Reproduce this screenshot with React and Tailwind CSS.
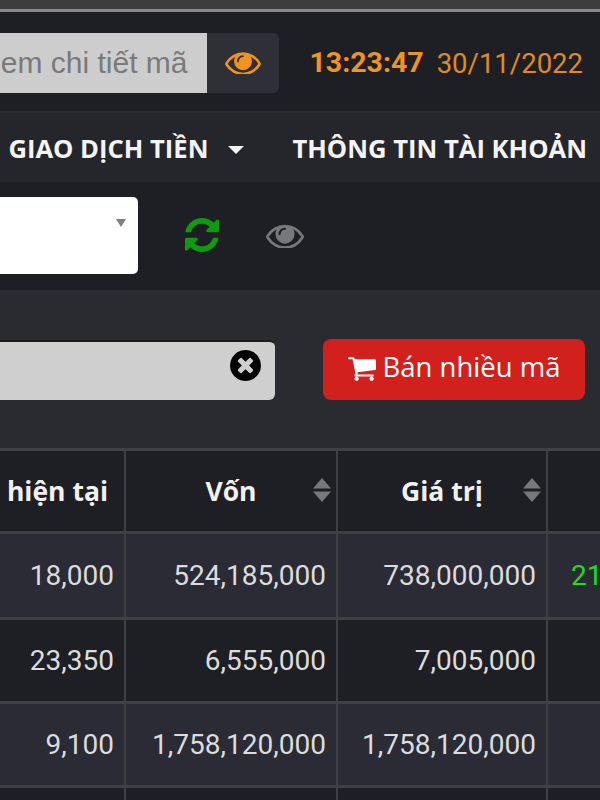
import React from "react";

const sans = "font-['Open_Sans','Noto_Sans',sans-serif]";
const digits = "font-['Roboto',sans-serif]";

function Eye({ className }) {
  return (
    <svg viewBox="0 320 1792 1152" className={className} fill="currentColor">
      <path d="M1664 960q-152-236-381-353 61 104 61 225 0 185-131.500 316.500t-316.500 131.500-316.500-131.500-131.500-316.500q0-121 61-225-229 117-381 353 133 205 333.500 326.500t434.500 121.500 434.500-121.500 333.500-326.500zm-720-384q0-20-14-34t-34-14q-125 0-214.500 89.500t-89.500 214.500q0 20 14 34t34 14 34-14 14-34q0-86 61-147t147-61q20 0 34-14t14-34zm848 384q0 34-20 69-140 230-376.500 368.500t-499.500 138.500-499.500-139-376.500-368q-20-35-20-69t20-69q140-229 376.500-368t499.500-139 499.500 139 376.500 368q20 35 20 69z" />
    </svg>
  );
}

function Refresh({ className }) {
  return (
    <svg viewBox="128 128 1536 1536" className={className} fill="currentColor">
      <path d="M1639 1056q0 5-1 7-64 268-268 434.500t-478 166.500q-146 0-282.500-55t-243.500-157l-129 129q-19 19-45 19t-45-19-19-45v-448q0-26 19-45t45-19h448q26 0 45 19t19 45-19 45l-137 137q71 66 161 102t187 36q134 0 250-65t186-179q11-17 53-117 8-23 30-23h192q13 0 22.500 9.500t9.500 22.500zm25-800v448q0 26-19 45t-45 19h-448q-26 0-45-19t-19-45 19-45l138-138q-148-137-349-137-134 0-250 65t-186 179q-11 17-53 117-8 23-30 23h-199q-13 0-22.500-9.500t-9.500-22.500v-7q65-268 270-434.500t480-166.500q146 0 284 55.500t245 156.500l130-129q19-19 45-19t45 19 19 45z" />
    </svg>
  );
}

function Cart({ className }) {
  return (
    <svg viewBox="64 256 1664 1408" className={className} fill="currentColor">
      <path d="M704 1536q0 52-38 90t-90 38-90-38-38-90 38-90 90-38 90 38 38 90zm896 0q0 52-38 90t-90 38-90-38-38-90 38-90 90-38 90 38 38 90zm128-1088v512q0 24-16.500 42.500t-40.500 21.500l-1044 122q13 60 13 70 0 16-24 64h920q26 0 45 19t19 45-19 45-45 19h-1024q-26 0-45-19t-19-45q0-11 8-31.500t16-36 21.500-40 15.500-29.500l-177-823h-204q-26 0-45-19t-19-45 19-45 45-19h256q16 0 28.500 6.500t19.500 15.500 13 24.500 8 26 5.500 29.500 4.500 26h1201q26 0 45 19t19 45z" />
    </svg>
  );
}

function CloseCircle({ className }) {
  return (
    <svg viewBox="128 128 1536 1536" className={className} fill="currentColor">
      <path d="M1277 1122q0-26-19-45l-181-181 181-181q19-19 19-45 0-27-19-46l-90-90q-19-19-46-19-26 0-45 19l-181 181-181-181q-19-19-45-19-27 0-46 19l-90 90q-19 19-19 46 0 26 19 45l181 181-181 181q-19 19-19 45 0 27 19 46l90 90q19 19 46 19 26 0 45-19l181-181 181 181q19 19 45 19 27 0 46-19l90-90q19-19 19-46zm387-226q0 209-103 385.500t-279.500 279.500-385.500 103-385.500-103-279.500-279.500-103-385.500 103-385.500 279.500-279.500 385.500-103 385.500 103 279.500 279.500 103 385.500z" />
    </svg>
  );
}

function Sort() {
  return (
    <svg viewBox="0 0 18 24" className="w-[18px] h-[24px] text-[#77787c]" fill="currentColor">
      <path d="M9 0l9 10.500H0z" />
      <path d="M9 24l9-10.500H0z" />
    </svg>
  );
}

function Th({ w, children, sort, align = "justify-center" }) {
  return (
    <div className={`relative ${w} shrink-0 flex items-center ${align} pt-[2px] border-r-2 border-[#3f4044] font-bold text-[#f1f1f1] text-[26.500px] whitespace-nowrap`}>
      {children}
      {sort && <span className="absolute right-[5px] top-[27px] flex"><Sort /></span>}
    </div>
  );
}

function Td({ w, children }) {
  return (
    <div className={`${w} shrink-0 flex items-center justify-end pr-[10px] pt-[1px] border-r-2 border-[#3f4044] text-[#dcdcdc] text-[28px] ${digits}`}>
      {children}
    </div>
  );
}

function Row({ bg, h, a, b, c, d }) {
  return (
    <div className={`flex ${h} ${bg} border-b-[3px] border-[#3f4044]`}>
      <Td w="w-[126px]">{a}</Td>
      <Td w="w-[212px]">{b}</Td>
      <Td w="w-[210px]">{c}</Td>
      <div className={`flex-1 flex items-center pl-[23px] pt-[1px] text-[#1fdc1f] text-[28px] overflow-hidden whitespace-nowrap ${digits}`}>{d}</div>
    </div>
  );
}

export default function App() {
  return (
    <div className={`${sans} w-[600px] h-[800px] overflow-hidden bg-[#1e1f24]`}>
      <div className="h-[12px] bg-[#3c3c3e] border-b-[3px] border-[#8a8a8c]" />
      <div className="h-[101px] flex items-center justify-end pr-[17px] pt-[2px] border-b-2 border-[#2c2d32]">
        <div className="flex-1 min-w-0 flex justify-end overflow-hidden">
          <div className="h-[60px] w-[240px] shrink-0 bg-[#cdcdcd] flex items-center justify-end pr-[20px] text-[#7a7a7a] text-[30px] font-['Liberation_Sans',sans-serif] whitespace-nowrap">
            Xem chi tiết mã
          </div>
        </div>
        <div className="h-[60px] w-[72px] shrink-0 bg-[#2f3037] rounded-r-[6px] flex items-center justify-center mr-[30px]">
          <Eye className="w-[36px] h-[23px] text-[#f0941f]" />
        </div>
        <span className={`text-[28.500px] font-bold text-[#f0941f] leading-none pt-[2px] ${digits}`}>13:23:47</span>
        <span className={`text-[27.500px] text-[#e08a20] leading-none pt-[2px] ml-[13px] ${digits}`}>30/11/2022</span>
      </div>
      <div className="h-[69px] bg-[#25262b] flex items-center justify-end pr-[13px] pt-[4px] text-[#f4f4f4] font-bold text-[25.600px] whitespace-nowrap overflow-hidden">
        <span>GIAO DỊCH TIỀN</span>
        <span className="ml-[20px] mr-[48px] w-0 h-0 border-x-[8px] border-x-transparent border-t-[8px] border-t-[#f4f4f4]" />
        <span>THÔNG TIN TÀI KHOẢN</span>
      </div>
      <div className="h-[108px] flex items-center pb-[2px]">
        <div className="relative w-[138px] h-[77px] shrink-0 bg-white rounded-r-[5px]">
          <span className="absolute right-[12px] top-[22px] w-0 h-0 border-x-[5px] border-x-transparent border-t-[8px] border-t-[#808080]" />
        </div>
        <Refresh className="ml-[47px] w-[34px] h-[34px] text-[#0f9a0f]" />
        <Eye className="ml-[47px] w-[38px] h-[25px] text-[#77787c]" />
      </div>
      <div className="h-[158px] bg-[#2a2b31] flex items-start pt-[50px]">
        <div className="relative w-[275px] h-[60px] shrink-0 bg-[#cfcfcf] rounded-r-[6px] border-t-2 border-[#1a1a1c]">
          <CloseCircle className="absolute right-[14px] top-[8px] w-[31px] h-[31px] text-black" />
        </div>
        <div className="ml-[48px] w-[262px] h-[61px] -mt-[1px] pb-[5px] bg-[#d2201c] rounded-[8px] flex items-center justify-center gap-[7px] text-white text-[27.500px] font-medium whitespace-nowrap">
          <Cart className="w-[28px] h-[24px] mt-[4px]" />
          <span>Bán nhiều mã</span>
        </div>
      </div>
      <div className="border-t-[3px] border-[#3f4044]">
        <div className="flex h-[83px] bg-[#1e1f24] border-b-[3px] border-[#3f4044]">
          <Th w="w-[126px]" align="justify-end pr-[16px]">hiện tại</Th>
          <Th w="w-[212px]" sort>Vốn</Th>
          <Th w="w-[210px]" sort>Giá trị</Th>
          <div className="flex-1" />
        </div>
        <Row bg="bg-[#2a2b35]" h="h-[86px]" a="18,000" b="524,185,000" c="738,000,000" d="21" />
        <Row bg="bg-[#1e1f24]" h="h-[84px]" a="23,350" b="6,555,000" c="7,005,000" d="" />
        <Row bg="bg-[#2a2b35]" h="h-[84px]" a="9,100" b="1,758,120,000" c="1,758,120,000" d="" />
        <Row bg="bg-[#1e1f24]" h="h-[84px]" a="" b="" c="" d="" />
      </div>
    </div>
  );
}
